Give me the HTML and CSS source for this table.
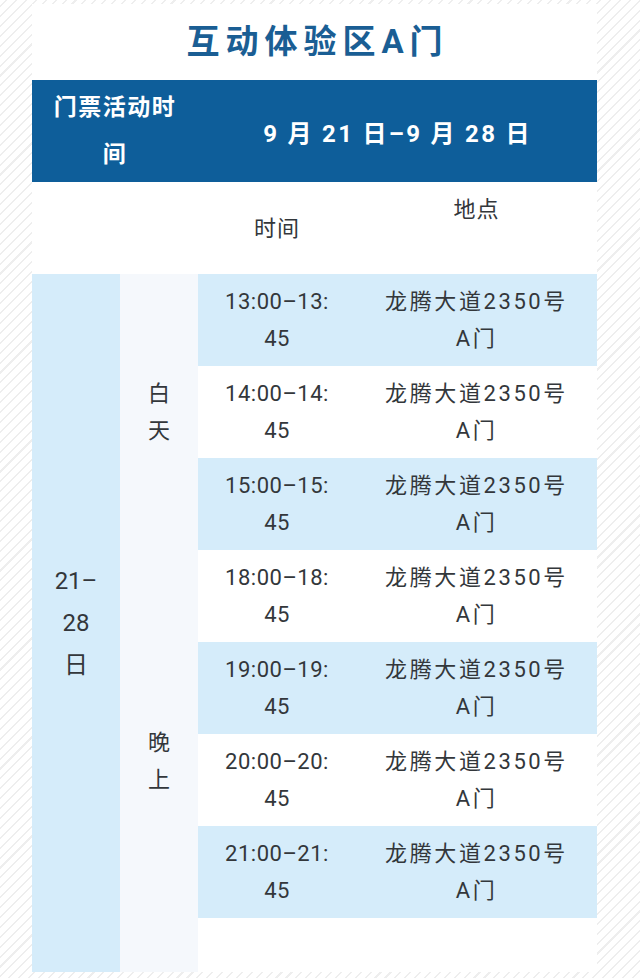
FILE: index.html
```html
<!DOCTYPE html>
<html lang="zh-CN">
<head>
<meta charset="utf-8">
<link rel="stylesheet" href="styles.css">
</head>
<body>
<div class="card">
  <h1 class="title">互动体验区A门</h1>
  <table class="sched">
    <colgroup>
      <col class="c-date">
      <col class="c-period">
      <col class="c-time">
      <col class="c-loc">
    </colgroup>
    <tr class="head">
      <th colspan="2" class="head-label">门票活动时<br>间</th>
      <th colspan="2" class="head-range">9 月 21 日–9 月 28 日</th>
    </tr>
    <tr class="sub">
      <td colspan="2"></td>
      <td class="sub-time">时间</td>
      <td class="sub-loc">地点</td>
    </tr>
    <tr class="row">
      <td rowspan="8" class="date">21–<br>28<br>日</td>
      <td rowspan="3" class="period">白<br>天</td>
      <td class="time blue">13:00–13:<br>45</td>
      <td class="loc blue">龙腾大道2350号<br>A门</td>
    </tr>
    <tr class="row">
      <td class="time">14:00–14:<br>45</td>
      <td class="loc">龙腾大道2350号<br>A门</td>
    </tr>
    <tr class="row">
      <td class="time blue">15:00–15:<br>45</td>
      <td class="loc blue">龙腾大道2350号<br>A门</td>
    </tr>
    <tr class="row">
      <td rowspan="5" class="period">晚<br>上</td>
      <td class="time">18:00–18:<br>45</td>
      <td class="loc">龙腾大道2350号<br>A门</td>
    </tr>
    <tr class="row">
      <td class="time blue">19:00–19:<br>45</td>
      <td class="loc blue">龙腾大道2350号<br>A门</td>
    </tr>
    <tr class="row">
      <td class="time">20:00–20:<br>45</td>
      <td class="loc">龙腾大道2350号<br>A门</td>
    </tr>
    <tr class="row">
      <td class="time blue">21:00–21:<br>45</td>
      <td class="loc blue">龙腾大道2350号<br>A门</td>
    </tr>
    <tr class="row-end">
      <td class="time"></td>
      <td class="loc"></td>
    </tr>
  </table>
</div>
</body>
</html>
```
FILE: styles.css
```css
html, body {
  margin: 0;
  padding: 0;
}
body {
  width: 640px;
  height: 978px;
  overflow: hidden;
  background-color: #ffffff;
  background-image: repeating-linear-gradient(135deg, #ffffff 0 4px, #eeeeee 4px 5.5px, #ffffff 5.5px 7px);
  font-family: Roboto, "Noto Sans CJK SC", sans-serif;
  color: #33373b;
}
.card {
  margin: 4px 0 0 32px;
  width: 565px;
  background: #ffffff;
}
.title {
  margin: 0;
  height: 76px;
  line-height: 76px;
  text-align: center;
  font-size: 33px;
  font-weight: 700;
  color: #1a5e94;
  letter-spacing: 6px;
  padding-left: 6px;
}
.sched {
  width: 565px;
  table-layout: fixed;
  border-collapse: collapse;
  border-spacing: 0;
}
.c-date { width: 88px; }
.c-period { width: 78px; }
.c-time { width: 158px; }
.c-loc { width: 241px; }
.sched th, .sched td {
  padding: 0;
  text-align: center;
  vertical-align: middle;
}
.head {
  height: 102px;
  background: #0e5e9a;
  color: #ffffff;
}
.head-label {
  font-size: 23px;
  font-weight: 700;
  line-height: 47px;
  letter-spacing: 1.5px;
  padding-left: 1.5px;
}
.head-range {
  font-size: 24px;
  font-weight: 700;
  letter-spacing: 2.3px;
  padding-left: 2.3px;
}
.sub {
  height: 92px;
  font-size: 22px;
  line-height: 37px;
}
.sub-time {
  letter-spacing: 1px;
}
.sub-loc {
  vertical-align: top !important;
  padding-top: 9px !important;
  letter-spacing: 1px;
}
.row {
  height: 92px;
}
.row-end {
  height: 54px;
}
.date {
  background: #d5ecfa;
  font-size: 24px;
  line-height: 42px;
}
.period {
  background: #f5f8fc;
  font-size: 22px;
  line-height: 37px;
}
.time {
  font-size: 22px;
  line-height: 37px;
  letter-spacing: 0.5px;
  background: #ffffff;
}
.loc {
  font-size: 22px;
  line-height: 37px;
  letter-spacing: 2.6px;
  padding-left: 2.6px;
  background: #ffffff;
}
.time.blue, .loc.blue {
  background: #d5ecfa;
}
```
